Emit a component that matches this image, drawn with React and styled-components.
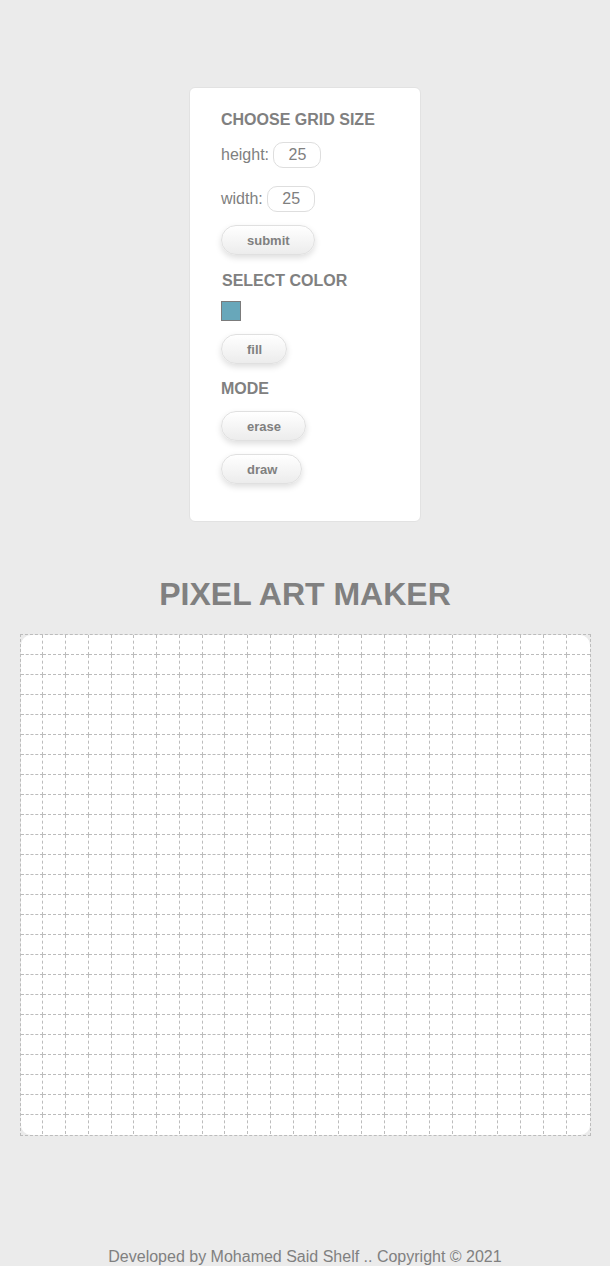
import React, { useState } from "react";
import styled, { createGlobalStyle } from "styled-components";

// Global Styles

const GlobalStyle = createGlobalStyle`
  html, body {
    margin: 0;
    padding: 0;
    background: #ebebeb;
  }

  body {
    font-family: "Liberation Sans", Arial, sans-serif;
    color: #808080;
  }
`;

const GRID_SIZE = 25;

// Custom Styles

const Page = styled.div`
  display: flex;
  flex-direction: column;
  align-items: center;
  padding-top: 87px;
`;

const Panel = styled.div`
  width: 232px;
  box-sizing: border-box;
  background: #fff;
  border: 1px solid #e2e2e2;
  border-radius: 6px;
  padding: 23px 31px 37px;
  display: flex;
  flex-direction: column;
  align-items: flex-start;
`;

const Heading = styled.h3`
  margin: ${(p) => p.$top || 0}px 0 0;
  font-size: 16px;
  line-height: 18px;
  font-weight: bold;
  color: #808080;
  padding-left: ${(p) => (p.$nudge ? 1 : 0)}px;
`;

const FieldRow = styled.label`
  display: flex;
  align-items: center;
  margin-top: ${(p) => p.$top}px;
  font-size: 16px;
  color: #808080;
  white-space: pre;
`;

const NumberInput = styled.input`
  width: 48px;
  height: 26px;
  box-sizing: border-box;
  border: 1px solid #dedede;
  border-radius: 10px;
  font-family: inherit;
  font-size: 16px;
  color: #808080;
  text-align: center;
  padding: 0;
  outline: none;
  background: #fff;
`;

const PillButton = styled.button`
  margin-top: ${(p) => p.$top}px;
  height: 30px;
  padding: 0 24px 0 25px;
  border: 1px solid #e0e0e0;
  border-radius: 15px;
  background: linear-gradient(to bottom, #ffffff 0%, #ececec 100%);
  box-shadow: 0 3px 6px rgba(0, 0, 0, 0.13);
  font-family: inherit;
  font-size: 13px;
  font-weight: bold;
  color: #808080;
  cursor: pointer;
`;

const Swatch = styled.div`
  margin-top: 11px;
  width: 20px;
  height: 20px;
  box-sizing: border-box;
  border: 1px solid #7b7b7b;
  background: ${(p) => p.$color};
`;

const Title = styled.h1`
  margin: 54px 0 0;
  font-size: 32px;
  line-height: 37px;
  font-weight: bold;
  color: #808080;
  text-align: center;
`;

const Board = styled.div`
  margin-top: 21px;
  width: 571px;
  box-sizing: border-box;
  border: 1px dashed #bcbcbc;
`;

const Grid = styled.div`
  display: grid;
  grid-template-columns: repeat(${GRID_SIZE}, 1fr);
  grid-auto-rows: 20px;
  background: #fff;
  border-radius: 10px;
  overflow: hidden;

  & > div:nth-last-child(-n + ${GRID_SIZE}) {
    height: 19px;
    border-bottom: none;
  }
  & > div:nth-child(${GRID_SIZE}n) {
    border-right: none;
  }
`;

const Cell = styled.div`
  box-sizing: border-box;
  border-right: 1px dashed #bcbcbc;
  border-bottom: 1px dashed #bcbcbc;
  background: ${(p) => p.$fill || "transparent"};
`;

const Footer = styled.footer`
  margin-top: 111px;
  font-size: 16px;
  line-height: 19px;
  color: #808080;
  text-align: center;
`;

function App() {
  const [height, setHeight] = useState(25);
  const [width, setWidth] = useState(25);
  const [color] = useState("#68a7ba");
  const [cells, setCells] = useState({});
  const [mode, setMode] = useState("draw");

  const paint = (i) => {
    setCells({ ...cells, [i]: mode === "draw" ? color : undefined });
  };

  return (
    <>
      <GlobalStyle />
      <Page>
        <Panel>
          <Heading>CHOOSE GRID SIZE</Heading>
          <FieldRow $top={13}>
            {"height: "}
            <NumberInput type="text" value={height} onChange={(e) => setHeight(e.target.value)} />
          </FieldRow>
          <FieldRow $top={18}>
            {"width: "}
            <NumberInput type="text" value={width} onChange={(e) => setWidth(e.target.value)} />
          </FieldRow>
          <PillButton $top={13}>submit</PillButton>

          <Heading $top={17} $nudge>SELECT COLOR</Heading>
          <Swatch $color={color} />
          <PillButton $top={13}>fill</PillButton>

          <Heading $top={16}>MODE</Heading>
          <PillButton $top={13} onClick={() => setMode("erase")}>erase</PillButton>
          <PillButton $top={13} onClick={() => setMode("draw")}>draw</PillButton>
        </Panel>

        <Title>PIXEL ART MAKER</Title>

        <Board>
          <Grid>
            {Array.from({ length: GRID_SIZE * GRID_SIZE }).map((_, i) => (
              <Cell key={i} $fill={cells[i]} onClick={() => paint(i)} />
            ))}
          </Grid>
        </Board>

        <Footer>Developed by Mohamed Said Shelf .. Copyright © 2021</Footer>
      </Page>
    </>
  );
}

export default App;
